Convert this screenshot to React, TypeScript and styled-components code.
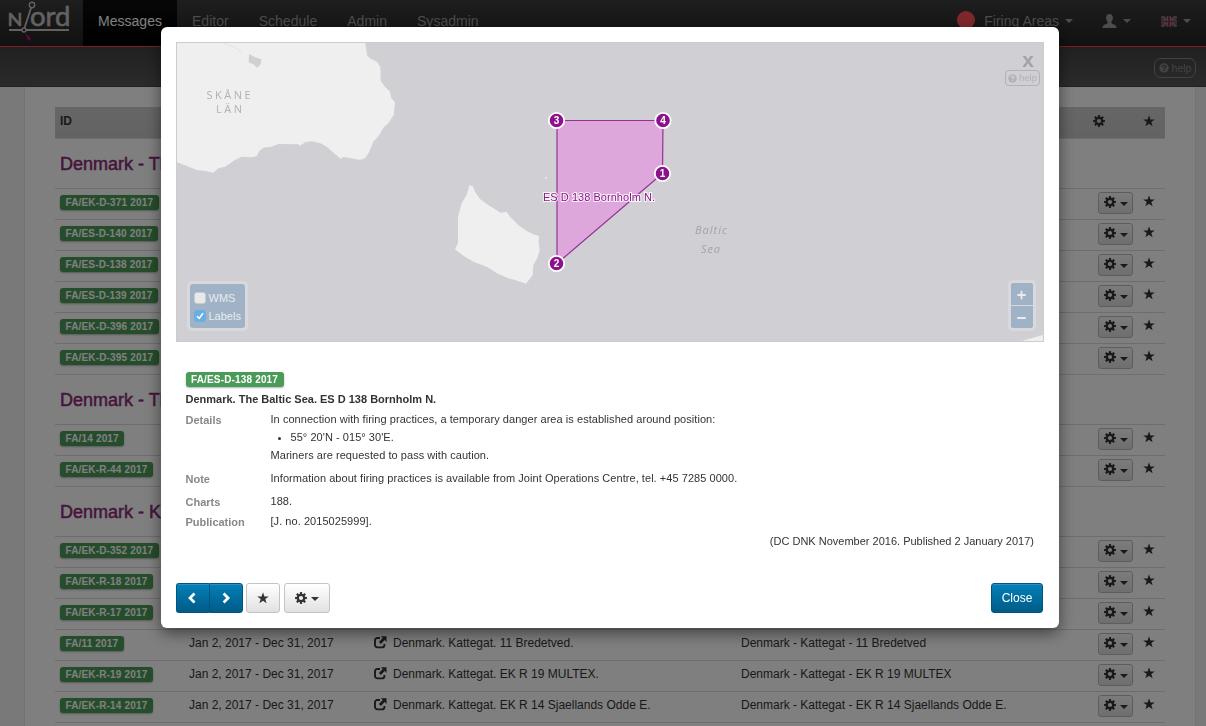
import React from "react";
import styled, { createGlobalStyle, css } from "styled-components";

const GlobalStyle = createGlobalStyle`
  *, *::before, *::after { box-sizing: border-box; }
  html, body { margin: 0; padding: 0; height: 726px; overflow: hidden; }
  body {
    background: #f3f3f3;
    color: #333;
    font-family: "Liberation Sans", Arial, sans-serif;
    font-size: 12px;
    line-height: 18px;
  }
`;

/* ---------- icons ---------- */

const CogIcon = ({ size = 12 }: { size?: number }) => (
  <svg width={size} height={size} viewBox="0 0 12 12" aria-hidden="true">
    <circle cx="6" cy="6" r="3.2" fill="none" stroke="currentColor" strokeWidth="2.2" />
    {[0, 45, 90, 135, 180, 225, 270, 315].map((angle) => (
      <rect key={angle} x="4.9" y="0.1" width="2.2" height="2.2" fill="currentColor" transform={`rotate(${angle} 6 6)`} />
    ))}
  </svg>
);

const StarIcon = ({ size = 12 }: { size?: number }) => (
  <svg width={size} height={size} viewBox="0 0 12 12" aria-hidden="true">
    <path d="M6 .2 7.4 4.4H11.8L8.3 7 9.6 11.3 6 8.7 2.4 11.3 3.7 7 .2 4.4H4.6Z" fill="currentColor" />
  </svg>
);

const ShareIcon = () => (
  <svg width="13" height="13" viewBox="0 0 13 13" aria-hidden="true">
    <path d="M6 2H3.4A2.4 2.4 0 0 0 1 4.400V9A2.400 2.400 0 0 0 3.400 11.400H8A2.400 2.400 0 0 0 10.400 9V8" fill="none" stroke="currentColor" strokeWidth="1.9" />
    <path d="M6.800 .2H12.500V5.900L10.700 4.100 6.900 7.900 4.900 5.900 8.700 2.100Z" fill="currentColor" />
  </svg>
);

const ChevronIcon = ({ flip = false }: { flip?: boolean }) => (
  <svg width="10" height="12" viewBox="0 0 10 12" aria-hidden="true">
    <path d={flip ? "M2.600 1.500 7.100 6 2.600 10.500" : "M6.500 1.500 2 6 6.500 10.500"} fill="none" stroke="currentColor" strokeWidth="2.700" />
  </svg>
);

const QuestionIcon = ({ size, mark }: { size: number; mark: string }) => (
  <svg width={size} height={size} viewBox="0 0 10 10" aria-hidden="true">
    <circle cx="5" cy="5" r="4.700" fill="currentColor" />
    <path d="M3.400 3.900C3.400 1.900 6.700 1.900 6.700 3.800 6.700 5 5 4.900 5 6.100" fill="none" stroke={mark} strokeWidth="1.300" />
    <rect x="4.350" y="6.800" width="1.300" height="1.200" fill={mark} />
  </svg>
);

const UserIcon = () => (
  <svg width="15" height="14" viewBox="0 0 15 14" aria-hidden="true">
    <path d="M7.500 0C9.800 0 11 1.700 10.900 4 10.800 6 9.800 7.300 9.300 8.100 9.200 9.500 10 9.800 12 10.500 13.800 11.100 14.500 11.900 14.500 14H.5C.5 11.900 1.200 11.100 3 10.500 5 9.800 5.800 9.500 5.700 8.100 5.200 7.300 4.200 6 4.100 4 4 1.700 5.200 0 7.500 0Z" fill="currentColor" />
  </svg>
);

const FlagIcon = () => (
  <svg width="16" height="11" viewBox="0 0 16 11" opacity=".6" aria-hidden="true">
    <rect width="16" height="11" fill="#2b4a90" />
    <path d="M0 0 16 11M16 0 0 11" stroke="#ddd" strokeWidth="2.400" />
    <path d="M0 0 16 11M16 0 0 11" stroke="#c33" strokeWidth="1" />
    <path d="M8 0V11M0 5.500H16" stroke="#ddd" strokeWidth="3.600" />
    <path d="M8 0V11M0 5.500H16" stroke="#c8323c" strokeWidth="2.200" />
  </svg>
);

const Logo = () => (
  <svg width="83" height="46" viewBox="0 0 83 46" aria-label="Njord">
    <g fill="#c4c4c4" stroke="#c4c4c4" strokeWidth=".6" fontFamily="Lato, sans-serif">
      <text x="7.500" y="26" fontSize="17.500" textLength="15" lengthAdjust="spacingAndGlyphs">N</text>
      <text x="30" y="26" fontSize="27" textLength="40.500" lengthAdjust="spacingAndGlyphs">ord</text>
    </g>
    <g fill="none" stroke="#c4c4c4" strokeWidth="1.400">
      <path d="M31 8 24.500 28" strokeWidth="1.800" />
      <circle cx="32" cy="5" r="2.700" />
      <path d="M9 30H22M26 30H69" strokeWidth="1.800" />
      <circle cx="24" cy="30" r="2" />
    </g>
    <path d="M25.300 33 31 38.500C31.300 41 28.500 41.500 27.500 39.500Z" fill="#b0107c" />
  </svg>
);

const Caret = styled.span`
  width: 0;
  height: 0;
  border: 4px solid transparent;
  border-top-color: currentColor;
  border-bottom: 0;
`;

/* ---------- page header ---------- */

const Navbar = styled.header`
  display: flex;
  height: 47px;
  background: linear-gradient(#3c3c3c, #222);
  border-bottom: 1px solid #f83c46;
  font-size: 14px;
  line-height: 20px;
  color: #999;
`;

const NavItem = styled.a<{ $active?: boolean }>`
  height: 46px;
  padding: 11px 15px 0;
  letter-spacing: 0.02px;
  ${(p) => p.$active && css`
    background: linear-gradient(#0d0d0d, #000);
    color: #fff;
  `}
`;

const NavTools = styled.div`
  display: flex;
  align-items: center;
  height: 42px;
  margin-left: auto;
  padding-right: 15px;
`;

const NavTool = styled.span<{ $gap: number; $after?: number }>`
  display: flex;
  align-items: center;
  gap: ${(p) => p.$gap}px;
  margin-right: ${(p) => p.$after ?? 0}px;
`;

const StatusDot = styled.span`
  width: 18px;
  height: 18px;
  margin: -3px 3px 0 0;
  border-radius: 50%;
  background: #ff5058;
`;

const SubBar = styled.div`
  display: flex;
  justify-content: flex-end;
  height: 40px;
  padding: 11px 10px 0;
  background: linear-gradient(#424242, #565656);
  border-bottom: 1px solid #444;
`;

const HelpButton = styled.span<{ $small?: boolean }>`
  display: flex;
  align-items: center;
  justify-content: center;
  gap: ${(p) => (p.$small ? 2 : 3)}px;
  width: ${(p) => (p.$small ? 35 : 42)}px;
  height: ${(p) => (p.$small ? 16 : 20)}px;
  border: 1px solid ${(p) => (p.$small ? "#b2b2b6" : "#858585")};
  border-radius: ${(p) => (p.$small ? 4 : 7)}px;
  color: ${(p) => (p.$small ? "#b2b2b6" : "#858585")};
  font-size: ${(p) => (p.$small ? 9.5 : 10.5)}px;
  line-height: 12px;
`;

/* ---------- message list ---------- */

const Content = styled.main`
  height: 639px;
  margin: 0 10px 0 24px;
  padding: 20px 30px 0;
  overflow: hidden;
  background: #fff;
  border: solid #e4e4e4;
  border-width: 0 1px;
`;

const ListHeader = styled.div`
  display: flex;
  align-items: center;
  height: 31px;
  padding: 0 10px 3px 5px;
  background: linear-gradient(#cdcdcd, #c6c6c6);
  font-weight: bold;
`;

const HeaderIcons = styled.div`
  display: flex;
  gap: 38px;
  margin-left: auto;
  color: #333;
  line-height: 0;
`;

const Group = styled.section`
  &:last-child { border-bottom: 1px solid #dadada; }
`;

const GroupTitle = styled.h2`
  height: 50px;
  margin: 0;
  padding: 15px 5px 0;
  border-top: 1px solid #ddd;
  color: #8b2a78;
  font-size: 18px;
  font-weight: normal;
  line-height: 20px;
  -webkit-text-stroke: 0.5px #8b2a78;
`;

const Row = styled.div`
  display: grid;
  grid-template-columns: 129px 185px 19px 348px 357px 45px 12px;
  align-items: start;
  height: 31px;
  padding: 3px 0 0 5px;
  border-top: 1px solid #dadada;
`;

const Badge = styled.span`
  display: block;
  width: max-content;
  height: 15px;
  padding: 0 5.500px;
  border-radius: 3px;
  background: #4b9b58;
  box-shadow: 0 1px 2px rgba(0, 0, 0, 0.3);
  color: #fff;
  font-size: 10px;
  font-weight: bold;
  letter-spacing: 0.16px;
  line-height: 15px;
`;

const BadgeCell = styled.div`
  padding-top: 3px;
`;

const RowIcon = styled.div`
  padding-top: 3px;
  line-height: 0;
`;

const RowText = styled.span`
  padding-top: 1px;
  white-space: nowrap;
`;

const Button = styled.button<{ $width: number; $mini?: boolean; $primary?: boolean }>`
  display: flex;
  align-items: center;
  justify-content: center;
  gap: 4px;
  width: ${(p) => p.$width}px;
  height: ${(p) => (p.$mini ? 22 : 30)}px;
  padding: 0 0 1px;
  border: 1px solid #c4c4c4;
  border-radius: 3px;
  background: linear-gradient(#fff, #e1e1e1);
  color: #333;
  font: 12px "Liberation Sans", Arial, sans-serif;
  ${(p) => p.$mini && css`
    padding: 0 0 2px;
    border-color: #bbb;
    background: linear-gradient(#f8f8f8, #ddd);
  `}
  ${(p) => p.$primary && css`
    border-color: #005580;
    background: linear-gradient(#0480b8, #005b87);
    box-shadow: inset 0 1px 0 rgba(255, 255, 255, 0.15);
    color: #fff;
  `}
  & > ${Caret} { margin-top: 3px; }
`;

/* ---------- dialog ---------- */

const Backdrop = styled.div`
  position: fixed;
  inset: 0;
  display: flex;
  justify-content: center;
  align-items: flex-start;
  padding: 27px 147px 0 161px;
  background: rgba(0, 0, 0, 0.5);
`;

const Dialog = styled.section`
  width: 898px;
  height: 601px;
  padding: 15px;
  border-radius: 6px;
  background: #fff;
  box-shadow: 0 5px 15px rgba(0, 0, 0, 0.5);
`;

const MapFrame = styled.div`
  position: relative;
  height: 300px;
  border: 1px solid #ccc;
  background: #d0cfd4;
`;

const MapSvg = styled.svg`
  display: block;
  width: 866px;
  height: 298px;
`;

const MapCorner = styled.div`
  position: absolute;
  top: 6px;
  right: 3px;
  display: flex;
  flex-direction: column;
  align-items: flex-end;
`;

const CloseMark = styled.span`
  margin-right: 6px;
  color: #a3a3a7;
  font-size: 21px;
  font-weight: bold;
  line-height: 21px;
`;

const ControlPanel = styled.div`
  position: absolute;
  border: 3px solid #d9d8dd;
  border-radius: 5px;
  background: #d9d8dd;
`;

const LayerPanel = styled(ControlPanel)`
  left: 10px;
  bottom: 10px;
  width: 61px;
  height: 50px;
`;

const LayerList = styled.div`
  height: 44px;
  padding: 5px 4px;
  border-radius: 3px;
  background: #a0b2c5;
`;

const LayerOption = styled.label`
  display: flex;
  align-items: center;
  gap: 2.500px;
  height: 18px;
  color: #e7ebf0;
  font-size: 11px;
`;

const CheckBox = styled.span<{ $checked?: boolean }>`
  display: grid;
  place-items: center;
  width: 12px;
  height: 12px;
  border: 1px solid ${(p) => (p.$checked ? "#68b0e4" : "#ccc")};
  border-radius: 3px;
  background: ${(p) => (p.$checked ? "#68b0e4" : "#e9e9ec")};
`;

const ZoomPanel = styled(ControlPanel)`
  right: 7px;
  bottom: 10px;
  display: grid;
  gap: 1px;
  width: 28px;
  height: 51px;
`;

const ZoomButton = styled.span`
  display: grid;
  place-items: center;
  padding-top: 2px;
  background: #a0b2c5;
  &:first-child { border-radius: 2px 2px 0 0; }
  &:last-child { border-radius: 0 0 2px 2px; }
`;

const Message = styled.article`
  height: 241px;
  padding: 30px 10px 0 9.500px;
  font-size: 11px;
`;

const MessageTitle = styled.h3`
  margin: 3px 0 2px;
  font-size: 11px;
  font-weight: bold;
  line-height: 18px;
`;

const Field = styled.div<{ $after: number }>`
  display: grid;
  grid-template-columns: 85px 1fr;
  margin-bottom: ${(p) => p.$after}px;
`;

const FieldLabel = styled.span`
  padding-top: 1px;
  margin-bottom: -1px;
  color: #888;
  font-weight: bold;
`;

const FieldValue = styled.div`
  letter-spacing: 0.05px;
  p, ul { margin: 0; }
  ul { padding-left: 20px; }
`;

const Published = styled.p`
  margin: 0;
  text-align: right;
`;

const Footer = styled.footer`
  display: flex;
  align-items: center;
  padding-right: 1px;
`;

const ButtonGroup = styled.div`
  display: flex;
  margin-right: 3px;
  ${Button}:first-child { border-radius: 3px 0 0 3px; border-right: 0; }
  ${Button}:last-child { border-radius: 0 3px 3px 0; }
`;

const MoreActions = styled.div`
  margin: 0 auto 0 4px;
`;

/* ---------- data ---------- */

type Entry = { id: string; title?: string; area?: string };

const groups: { name: string; entries: Entry[] }[] = [
  {
    name: "Denmark - The Baltic Sea",
    entries: [
      { id: "FA/EK-D-371 2017" },
      { id: "FA/ES-D-140 2017" },
      { id: "FA/ES-D-138 2017" },
      { id: "FA/ES-D-139 2017" },
      { id: "FA/EK-D-396 2017" },
      { id: "FA/EK-D-395 2017" },
    ],
  },
  { name: "Denmark - The Sound", entries: [{ id: "FA/14 2017" }, { id: "FA/EK-R-44 2017" }] },
  {
    name: "Denmark - Kattegat",
    entries: [
      { id: "FA/EK-D-352 2017" },
      { id: "FA/EK-R-18 2017" },
      { id: "FA/EK-R-17 2017" },
      { id: "FA/11 2017", title: "Denmark. Kattegat. 11 Bredetved.", area: "Denmark - Kattegat - 11 Bredetved" },
      { id: "FA/EK-R-19 2017", title: "Denmark. Kattegat. EK R 19 MULTEX.", area: "Denmark - Kattegat - EK R 19 MULTEX" },
      {
        id: "FA/EK-R-14 2017",
        title: "Denmark. Kattegat. EK R 14 Sjaellands Odde E.",
        area: "Denmark - Kattegat - EK R 14 Sjaellands Odde E.",
      },
    ],
  },
];

const pins = [
  { n: 3, x: 556.5, y: 120.5 },
  { n: 4, x: 663, y: 120.5 },
  { n: 1, x: 662.5, y: 173.5 },
  { n: 2, x: 556.5, y: 263.5 },
];

const MessageRow = ({ entry }: { entry: Entry }) => (
  <Row>
    <BadgeCell><Badge>{entry.id}</Badge></BadgeCell>
    <RowText>{entry.title && "Jan 2, 2017 - Dec 31, 2017"}</RowText>
    <RowIcon>{entry.title && <ShareIcon />}</RowIcon>
    <RowText>{entry.title}</RowText>
    <RowText>{entry.area}</RowText>
    <Button $width={35} $mini><CogIcon /><Caret /></Button>
    <RowIcon><StarIcon /></RowIcon>
  </Row>
);

const AreaMap = () => (
  <MapFrame>
    <MapSvg viewBox="177 43 866 298">
      <g fill="#efefef">
        <path d="M176 42H365L367.300 55.700 371 59 376.700 61.700 380.300 66.700 380.700 81 385 86.700 390 91.700 391.300 98.300 395 102.300 393.700 115 388.300 123.300 383.300 127.700 379.300 135 373.300 141.700 369.300 151.700 365 158.300 360 160 351.700 158.300 343.300 157 340.700 158.700 335 154 326.700 146.700 320 143 311.700 141.300 305 142.300 300 146 298.300 144.300 278.300 144 271.700 146.700 263.300 147.700 259.300 151 256.700 156 251.700 157.300 241.700 156.700 235 160 225 166.700 218.300 168.300 213.300 172.700 205 171 196.700 170 186.700 166 176 162Z" />
        <path d="M469.300 185.300 472.700 186 475 191.700 480 199 488.300 205 500.700 212.700 506.700 211.700 510 216.700 518.300 225 526.700 231 533.300 234.300 539 236 538.700 243.300 539.700 250 537.300 258.300 533.300 265 532.700 275 526 283.700 515 280 508.300 278.300 498.300 274 486.700 266.700 473.300 261.700 463.300 255.700 455 249.300 458 243.300 458 216.700 461.700 203.300 466.700 195Z" />
        <path d="M1022 341 1043 335V341Z" />
        <circle cx="546" cy="177.700" r="1" />
      </g>
      <path d="M249 54 255 57.300 261.300 59.300 260.700 64.300 257.300 67.700 253.300 64.300 248.700 62.300Z" fill="#d0cfd4" />
      <path d="M223 43 232 46 242 52" fill="none" stroke="#e5e5e6" />
      <g fill="#b2b2b2" fontFamily="'Open Sans', sans-serif" fontSize="11">
        <text x="206.500" y="99" textLength="44">SKÅNE</text>
        <text x="216" y="113" textLength="26">LÄN</text>
      </g>
      <g fill="#a3a3a8" fontFamily="'Open Sans', sans-serif" fontSize="11" fontStyle="italic">
        <text x="695" y="234" textLength="32">Baltic</text>
        <text x="701" y="253" textLength="19">Sea</text>
      </g>
      <path d="M557 120.500H663L662.500 173.500 557 263.500Z" fill="#dea7dc" />
      <path d="M557 120.500H663L662.500 173.500 557 263.500Z" fill="none" stroke="#8b178b" strokeOpacity=".85" strokeWidth="1.200" />
      {pins.map((pin) => (
        <g key={pin.n}>
          <circle cx={pin.x} cy={pin.y} r="7.700" fill="#8b128b" stroke="#fff" strokeWidth="1.800" />
          <text x={pin.x} y={pin.y + 3.6} fill="#fff" fontSize="10" fontWeight="bold" textAnchor="middle">{pin.n}</text>
        </g>
      ))}
      <text x="543" y="201" fontSize="11" fill="#8b128b" stroke="#fff" strokeWidth="2" strokeOpacity=".85" paintOrder="stroke" textLength="112">
        ES D 138 Bornholm N.
      </text>
    </MapSvg>
    <MapCorner>
      <CloseMark>x</CloseMark>
      <HelpButton $small><QuestionIcon size={9} mark="#d0cfd4" />help</HelpButton>
    </MapCorner>
    <LayerPanel>
      <LayerList>
        <LayerOption><CheckBox />WMS</LayerOption>
        <LayerOption>
          <CheckBox $checked>
            <svg width="8" height="8" viewBox="0 0 8 8"><path d="M1 4.200 3.200 6.400 7 1.300" fill="none" stroke="#fff" strokeWidth="1.500" /></svg>
          </CheckBox>
          Labels
        </LayerOption>
      </LayerList>
    </LayerPanel>
    <ZoomPanel>
      <ZoomButton><svg width="10" height="10" viewBox="0 0 10 10"><path d="M4.500 .8V9.200M.3 5H8.700" stroke="#ececef" strokeWidth="1.800" /></svg></ZoomButton>
      <ZoomButton><svg width="10" height="10" viewBox="0 0 10 10"><path d="M.3 5H8.700" stroke="#ececef" strokeWidth="2" /></svg></ZoomButton>
    </ZoomPanel>
  </MapFrame>
);

export default function App() {
  return (
    <>
      <GlobalStyle />
      <Navbar>
        <Logo />
        <NavItem $active>Messages</NavItem>
        <NavItem>Editor</NavItem>
        <NavItem>Schedule</NavItem>
        <NavItem>Admin</NavItem>
        <NavItem>Sysadmin</NavItem>
        <NavTools>
          <NavTool $gap={6} $after={29}><StatusDot />Firing Areas<Caret /></NavTool>
          <NavTool $gap={6} $after={30}><UserIcon /><Caret /></NavTool>
          <NavTool $gap={6}><FlagIcon /><Caret /></NavTool>
        </NavTools>
      </Navbar>
      <SubBar>
        <HelpButton><QuestionIcon size={10} mark="#4a4a4a" />help</HelpButton>
      </SubBar>
      <Content>
        <ListHeader>
          ID
          <HeaderIcons><CogIcon /><StarIcon /></HeaderIcons>
        </ListHeader>
        {groups.map((group) => (
          <Group key={group.name}>
            <GroupTitle>{group.name}</GroupTitle>
            {group.entries.map((entry) => <MessageRow key={entry.id} entry={entry} />)}
          </Group>
        ))}
      </Content>
      <Backdrop>
        <Dialog>
          <AreaMap />
          <Message>
            <Badge>FA/ES-D-138 2017</Badge>
            <MessageTitle>Denmark. The Baltic Sea. ES D 138 Bornholm N.</MessageTitle>
            <Field $after={5}>
              <FieldLabel>Details</FieldLabel>
              <FieldValue>
                <p>In connection with firing practices, a temporary danger area is established around position:</p>
                <ul><li>55° 20'N - 015° 30'E.</li></ul>
                <p>Mariners are requested to pass with caution.</p>
              </FieldValue>
            </Field>
            <Field $after={5}>
              <FieldLabel>Note</FieldLabel>
              <FieldValue>Information about firing practices is available from Joint Operations Centre, tel. +45 7285 0000.</FieldValue>
            </Field>
            <Field $after={2}>
              <FieldLabel>Charts</FieldLabel>
              <FieldValue>188.</FieldValue>
            </Field>
            <Field $after={2}>
              <FieldLabel>Publication</FieldLabel>
              <FieldValue>[J. no. 2015025999].</FieldValue>
            </Field>
            <Published>(DC DNK November 2016. Published 2 January 2017)</Published>
          </Message>
          <Footer>
            <ButtonGroup>
              <Button $width={33} $primary><ChevronIcon /></Button>
              <Button $width={34} $primary><ChevronIcon flip /></Button>
            </ButtonGroup>
            <Button $width={34}><StarIcon /></Button>
            <MoreActions><Button $width={46}><CogIcon /><Caret /></Button></MoreActions>
            <Button $width={52} $primary>Close</Button>
          </Footer>
        </Dialog>
      </Backdrop>
    </>
  );
}
